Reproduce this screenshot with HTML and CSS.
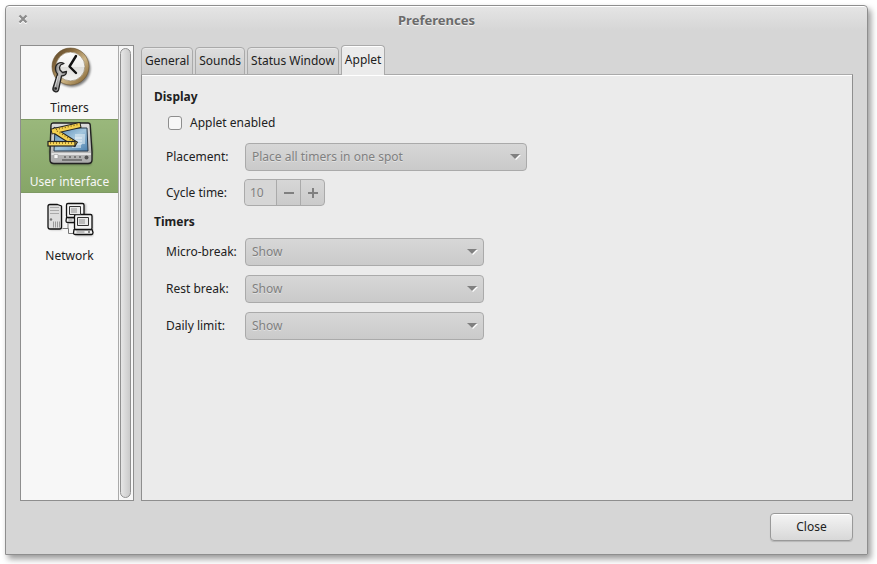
FILE: index.html
```html
<!DOCTYPE html>
<html lang="en">
<head>
<meta charset="utf-8">
<title>Preferences</title>
<link rel="stylesheet" href="styles.css">
</head>
<body>
<main class="window">
  <header class="titlebar">
    <button class="window-close" type="button" aria-label="Close window">
      <svg width="10" height="10" viewBox="0 0 10 10"><path d="M1.5 1.5 8.5 8.5M8.5 1.5 1.5 8.5" stroke="#fff" stroke-width="2.4" transform="translate(0 1)"/><path d="M1.5 1.5 8.5 8.5M8.5 1.5 1.5 8.5" stroke="#8c8c8c" stroke-width="2.4"/></svg>
    </button>
    <h1>Preferences</h1>
  </header>
  <div class="content">
    <nav class="sidebar">
      <div class="categories">
        <button type="button" class="category">
          <svg width="48" height="48" viewBox="0 0 48 48">
            <defs>
              <linearGradient id="ring" x1="0" y1="0" x2="1" y2="1"><stop offset="0" stop-color="#5b4528"/><stop offset=".3" stop-color="#8d7044"/><stop offset=".6" stop-color="#cdb586"/><stop offset="1" stop-color="#80602f"/></linearGradient>
              <linearGradient id="face" x1="0" y1="0" x2="0" y2="1"><stop offset="0" stop-color="#fff"/><stop offset=".5" stop-color="#efefed"/><stop offset=".52" stop-color="#dededb"/><stop offset="1" stop-color="#f8f8f6"/></linearGradient>
              <linearGradient id="steel" x1="0" y1="0" x2="1" y2="0"><stop offset="0" stop-color="#555"/><stop offset=".5" stop-color="#c4c4c4"/><stop offset="1" stop-color="#777"/></linearGradient>
              <filter id="soft" x="-20%" y="-20%" width="150%" height="150%"><feGaussianBlur stdDeviation="1.3"/></filter>
            </defs>
            <circle cx="26" cy="22.500" r="18.500" fill="#000" opacity=".5" filter="url(#soft)"/>
            <circle cx="24.500" cy="20.500" r="16.500" fill="url(#face)" stroke="url(#ring)" stroke-width="4"/>
            <circle cx="24.500" cy="20.500" r="18.500" fill="none" stroke="#6b5533" stroke-width=".6"/>
            <circle cx="24.500" cy="20.500" r="14.400" fill="none" stroke="#8a795b" stroke-width=".6"/>
            <path d="M30 10 23.500 20.500 30 27" fill="none" stroke="#111" stroke-width="2.400" stroke-linejoin="round" stroke-linecap="round"/>
            <path d="M18 17.500c-4-2.500-9 .5-8.500 6 .2 2 1 3.500 2 4.500L7 42c-1 4 4.500 5 5.500 2l3-14c3 0 5-2 5-4.500l-4 1-2.500-2.500-.5-2.500 1-2.500z" fill="url(#steel)" stroke="#222" stroke-width="1.300" stroke-linejoin="round"/>
            <path d="M12 30 9 41" stroke="#eee" stroke-width=".8"/>
            <circle cx="9.800" cy="42.500" r="1.200" fill="#222"/>
          </svg>
          <span>Timers</span>
        </button>
        <button type="button" class="category selected" aria-current="page">
          <svg width="48" height="48" viewBox="0 0 48 48">
            <defs>
              <linearGradient id="screen" x1="0" y1="0" x2="1" y2="1"><stop offset="0" stop-color="#4d82b1"/><stop offset=".5" stop-color="#a3c6dd"/><stop offset="1" stop-color="#4a7fae"/></linearGradient>
              <linearGradient id="shell" x1="0" y1="0" x2="0" y2="1"><stop offset="0" stop-color="#ddd"/><stop offset="1" stop-color="#aaa"/></linearGradient>
            </defs>
            <path d="M7 4h37l3 27-2 14H6L3 31z" fill="#000" opacity=".3" filter="url(#soft)"/>
            <path d="M7 3h35q2 0 2.200 2L46 32v8q0 3.500-4 3.500H8q-4 0-4-3.500v-8L5 5q.2-2 2-2z" fill="url(#shell)" stroke="#222" stroke-width="1.400"/>
            <path d="M9 8h32l1 23H8z" fill="url(#screen)" stroke="#26384a"/>
            <path d="M29 14h10v10h-4v4h-9v-9h3z" fill="#e4eef4" opacity=".55"/>
            <path d="M29 18h7M29 21h7M29 24h7" stroke="#fff" stroke-width=".7"/>
            <path d="M5.500 33h39.500v2H5.500z" fill="#e2e2e2"/>
            <path d="M8 34.500h4v4H8z" fill="#f6f6f6" stroke="#999" stroke-width=".6"/>
            <path d="M16 40h20M18 37h2m3 0h2m3 0h2m3 0h2" stroke="#666" stroke-width="1.300"/>
            <circle cx="40.500" cy="37.500" r="2" fill="#555"/>
            <path d="M8 11 32 5.500M9 11 28 23" stroke="#222" stroke-width="6" stroke-linecap="square"/>
            <path d="M8 11 32 5.500M9 11 28 23" stroke="#f4d04f" stroke-width="4" stroke-linecap="square"/>
            <path d="M10 9.500 32 4.500M11 11 27 21" stroke="#7b5c12" stroke-width="1.300" stroke-dasharray="1 2"/>
            <rect x="2" y="21.500" width="27" height="4.500" fill="#f8d75c" stroke="#222" stroke-width="1.200"/>
            <path d="M4 23h24" stroke="#7b5c12" stroke-width="1.300" stroke-dasharray="1 2"/>
          </svg>
          <span>User interface</span>
        </button>
        <button type="button" class="category">
          <svg width="48" height="48" viewBox="0 0 48 48">
            <path d="M4 13h12v23H4zM23 10h17v19H23zM30 21h17v21H30z" fill="#000" opacity=".25" filter="url(#soft)"/>
            <path d="M16.500 34.500h6v5h7M22 34.500v-5" stroke="#777"/>
            <g stroke="#111" stroke-width="1.300" stroke-linejoin="round">
              <path d="M4 10.500h7.500l4 1.500v21q0 2-2 2H4q-2 0-2-2V12.500q0-2 2-2z" fill="#dedede"/>
              <path d="M20.500 23.500h17.500l1 3q0 2-1.500 2h-16q-1.500 0-1.500-1.500z" fill="#f2f2f2"/>
              <path d="M22 9.500h14.500q1.500 0 1.500 1.500v11q0 1.500-1.500 1.500H22q-1.500 0-1.500-1.500V11q0-1.500 1.500-1.500z" fill="#f4f4f4"/>
              <path d="M28 35.500h18l1 3q0 2-1.500 2H29q-1.500 0-1.500-1.500z" fill="#f2f2f2"/>
              <path d="M30 20.500h14.500q1.500 0 1.500 1.500v12q0 1.500-1.500 1.500H30q-1.500 0-1.500-1.500V22q0-1.500 1.500-1.500z" fill="#f4f4f4"/>
            </g>
            <path d="M4 13.500h9M4 16.500h9M4 19.500h9" stroke="#aaa"/>
            <path d="M7.500 27.500v6M9.500 27.500v6M11.500 27.500v6M13.500 27.500v6" stroke="#999"/>
            <circle cx="5" cy="25.500" r="1.200" fill="#777"/>
            <path d="M23.500 12.500h11v8h-11zM31.500 23.500h11v8h-11z" fill="#e9e9e9" stroke="#333"/>
            <path d="M25 14h6v5h-6zM33 25h6v5h-6z" fill="#bcbcbc"/>
            <path d="M30.500 38h8M22.500 26h4" stroke="#888"/>
            <path d="M42 38h2" stroke="#222"/>
          </svg>
          <span>Network</span>
        </button>
      </div>
      <div class="scrollbar"></div>
    </nav>
    <section class="notebook">
      <div class="tabs" role="tablist">
        <button class="tab" type="button" role="tab">General</button>
        <button class="tab" type="button" role="tab">Sounds</button>
        <button class="tab" type="button" role="tab">Status Window</button>
        <button class="tab active" type="button" role="tab" aria-selected="true">Applet</button>
      </div>
      <form class="panel" role="tabpanel">
        <h2>Display</h2>
        <div class="check-row">
          <input type="checkbox" id="enabled"><label for="enabled">Applet enabled</label>
        </div>
        <div class="row">
          <label for="placement">Placement:</label>
          <div class="combo wide"><select id="placement" disabled><option>Place all timers in one spot</option></select></div>
        </div>
        <div class="row">
          <label for="cycle">Cycle time:</label>
          <div class="spin">
            <input id="cycle" type="text" value="10" disabled>
            <button type="button" disabled aria-label="Decrease"><svg width="12" height="12" viewBox="0 0 12 12"><path d="M1 6h10" stroke="#808080" stroke-width="2"/></svg></button>
            <button type="button" disabled aria-label="Increase"><svg width="12" height="12" viewBox="0 0 12 12"><path d="M1 6h10M6 1v10" stroke="#808080" stroke-width="2"/></svg></button>
          </div>
        </div>
        <h2>Timers</h2>
        <div class="row">
          <label for="micro">Micro-break:</label>
          <div class="combo"><select id="micro" disabled><option>Show</option></select></div>
        </div>
        <div class="row">
          <label for="rest">Rest break:</label>
          <div class="combo"><select id="rest" disabled><option>Show</option></select></div>
        </div>
        <div class="row">
          <label for="daily">Daily limit:</label>
          <div class="combo"><select id="daily" disabled><option>Show</option></select></div>
        </div>
      </form>
    </section>
  </div>
  <footer class="actions"><button type="button" class="close">Close</button></footer>
</main>
</body>
</html>
```
FILE: styles.css
```css
* {
  box-sizing: border-box;
}

body {
  display: flex;
  min-height: 100vh;
  margin: 0;
  padding: 5px 9px 9px 5px;
  background: #fff;
  color: #212121;
  font: 12px/16px "Noto Sans", sans-serif;
}

button, input, select {
  margin: 0;
  color: inherit;
  font: inherit;
}

svg {
  display: block;
  fill: none;
}

.window {
  display: flex;
  flex: 1;
  flex-direction: column;
  border: 1px solid #8e8e8e;
  border-radius: 4px 4px 0 0;
  background: linear-gradient(#e5e5e5, #d6d6d6 24px);
  box-shadow: inset 0 1px #fff, 3px 4px 6px rgba(0, 0, 0, 0.4);
}

.titlebar {
  display: grid;
  grid-template-columns: 34px 1fr 34px;
  align-items: center;
  height: 28px;
  margin-bottom: 11px;
}

.window-close {
  justify-self: center;
  padding: 0 0 2px;
  border: 0;
  background: none;
}

h1 {
  margin: 0;
  color: #6b6b6b;
  font-size: 13px;
  text-align: center;
  text-shadow: 0 1px #f4f4f4;
}

.content {
  display: flex;
  flex: 1;
  gap: 7px;
  padding: 0 14px;
}

.sidebar {
  display: flex;
  width: 114px;
  border: 1px solid #8e8e8e;
  background: #f7f7f7;
}

.categories {
  flex: 1;
  border-right: 1px solid #aaa;
}

.category {
  display: flex;
  flex-direction: column;
  align-items: center;
  gap: 6px;
  width: 100%;
  height: 74px;
  padding: 1px 0 3px;
  border: 0;
  background: none;
}

.category:first-child {
  height: 73px;
  padding-top: 0;
}

.selected {
  background: linear-gradient(#9ab87c, #86a567);
  box-shadow: inset 0 1px #7e9a64, inset 0 -1px #7e9a64;
  color: #f7f7f7;
}

.scrollbar {
  width: 11px;
  margin: 2px 2px 2px 1px;
  border: 1px solid #909090;
  border-radius: 6px;
  background: linear-gradient(90deg, #e6e6e6, #cacaca);
}

.notebook {
  display: flex;
  flex: 1;
  flex-direction: column;
}

.tabs {
  display: flex;
  align-items: flex-end;
  gap: 2px;
  height: 30px;
  margin-bottom: -1px;
}

.tab {
  height: 28px;
  padding: 0 3px;
  border: 1px solid #aaa;
  border-radius: 4px 4px 0 0;
  background: linear-gradient(#dedede, #cdcdcd);
  box-shadow: inset 0 1px #e8e8e8;
}

.tab.active {
  z-index: 1;
  height: 30px;
  padding-bottom: 1px;
  border-bottom: 0;
  background: #ebebeb;
  box-shadow: inset 0 1px #fff;
}

.panel {
  flex: 1;
  padding: 14px 12px;
  border: 1px solid #8e8e8e;
  border-top-color: #aaa;
  background: #ebebeb;
  box-shadow: inset 0 1px #fff;
}

h2 {
  margin: 0;
  font-size: 12px;
}

.check-row {
  display: flex;
  align-items: center;
  gap: 8px;
  height: 36px;
  margin-bottom: 2px;
  padding-left: 14px;
}

.check-row input {
  width: 14px;
  height: 14px;
  border: 1px solid #8e8e8e;
  border-radius: 3px;
  background: #f7f7f7;
  appearance: none;
}

.row {
  display: grid;
  grid-template-columns: 79px 1fr;
  align-items: center;
  margin: 0 0 9px 12px;
}

.check-row + .row {
  margin-bottom: 8px;
}

.row + h2 {
  margin: -1px 0 8px;
}

.combo {
  position: relative;
  width: 239px;
}

.combo.wide {
  width: 282px;
}

.combo::before,
.combo::after {
  position: absolute;
  top: 11px;
  right: 7px;
  border: 5px solid transparent;
  border-top: 5px solid #808080;
  border-bottom: 0;
  content: "";
}

.combo::before {
  top: 12px;
  right: 6px;
  border-top-color: #fff;
}

select {
  display: block;
  width: 100%;
  height: 28px;
  padding: 0 20px 0 6px;
  border: 1px solid #aaa;
  border-radius: 4px;
  background: linear-gradient(#d7d7d7, #cacaca);
  appearance: none;
}

select:disabled,
.spin input {
  color: #808080;
  opacity: 1;
  text-shadow: 0 1px #e2e2e2;
}

.spin {
  display: flex;
  width: 81px;
  height: 27px;
  margin-left: -1px;
  border: 1px solid #aaa;
  border-radius: 4px;
  background: linear-gradient(#d7d7d7, #cacaca);
}

.spin input {
  width: 31px;
  padding: 0 5px;
  border: 0;
  background: #d6d6d6;
  border-radius: 4px 0 0 4px;
}

.spin button {
  display: grid;
  flex: 1;
  place-items: center;
  padding: 0;
  border: 0;
  border-left: 1px solid #aaa;
  background: none;
}

.actions {
  display: flex;
  justify-content: flex-end;
  padding: 12px 14px 13px;
}

.close {
  width: 83px;
  height: 28px;
  padding: 0;
  border: 1px solid #999;
  border-radius: 4px;
  background: linear-gradient(#f4f4f4, #d8d8d8);
  box-shadow: inset 0 1px #fff, 0 1px 1px rgba(0, 0, 0, 0.15);
}
```
